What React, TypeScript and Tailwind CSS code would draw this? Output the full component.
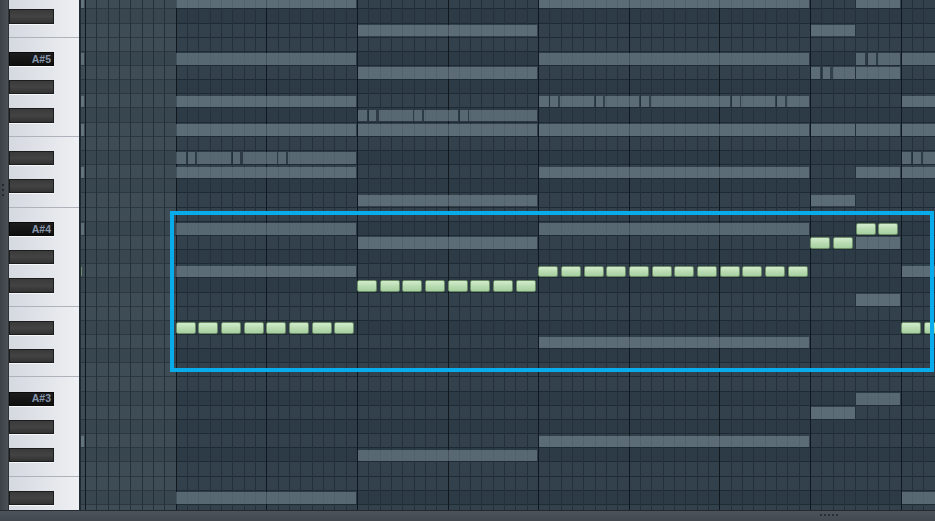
import React from "react";

const ROW_H = 14.1667;
const ROW0 = -4.78;
const COL_W = 11.3333;
const COL0 = 4;

const NAMES = [
  "D6", "C#6", "C6", "B5", "A#5", "A5", "G#5", "G5", "F#5", "F5", "E5", "D#5", "D5", "C#5", "C5", "B4",
  "A#4", "A4", "G#4", "G4", "F#4", "F4", "E4", "D#4", "D4", "C#4", "C4", "B3", "A#3", "A3", "G#3", "G3",
  "F#3", "F3", "E3", "D#3", "D3",
];

const isBlack = (n: string) => n.includes("#");
const isBoundary = (n: string) => n.startsWith("C") && !n.includes("#") || (n.startsWith("F") && !n.includes("#"));

type Note = { c: number; len: number; r: number };

const ghost: Note[] = [];
const full = (c: number, len: number, rows: number[]) => rows.forEach((r) => ghost.push({ c, len, r }));
const sub = (c: number, r: number, parts: [number, number][]) =>
  parts.forEach(([s, l]) => ghost.push({ c: c + s, len: l, r }));

// stubs from previous bar
full(-1, 1, [0, 4, 7, 9, 12, 16, 31]);
// segment 1
full(8, 16, [0, 4, 7, 9, 12, 16, 19, 35]);
sub(8, 11, [[0, 1], [1, 0.8], [1.85, 3.15], [5, 0.8], [5.85, 3.15], [9, 0.85], [9.85, 6.15]]);
// segment 2
full(24, 16, [2, 5, 9, 14, 17, 32]);
sub(24, 8, [[0, 1], [1, 0.8], [1.85, 3.15], [5, 0.8], [5.85, 3.15], [9, 0.85], [9.85, 6.15]]);
// segment 3
full(40, 24, [0, 4, 9, 12, 16, 24, 31]);
sub(40, 7, [
  [0, 1], [1, 0.8], [1.85, 3.15], [5, 0.8], [5.85, 3.15], [9, 0.85], [9.85, 7.15],
  [17, 0.85], [17.85, 3.15], [21, 0.85], [21.85, 2.15],
]);
// segment 4
full(64, 4, [2, 9, 14, 29]);
sub(64, 5, [[0, 0.95], [1.05, 0.8], [1.9, 2.1]]);
// segment 5
full(68, 4, [0, 5, 9, 12, 17, 21, 28]);
sub(68, 4, [[0, 0.95], [1.05, 0.8], [1.9, 2.1]]);
// segment 6
full(72, 8, [4, 7, 9, 12, 19, 35]);
sub(72, 11, [[0, 0.95], [1.02, 0.8], [1.9, 6.1]]);

const green: Note[] = [];
for (let i = 0; i < 8; i++) green.push({ c: 8 + i * 2, len: 2, r: 23 });
for (let i = 0; i < 8; i++) green.push({ c: 24 + i * 2, len: 2, r: 20 });
for (let i = 0; i < 12; i++) green.push({ c: 40 + i * 2, len: 2, r: 19 });
green.push({ c: 64, len: 2, r: 17 }, { c: 66, len: 2, r: 17 });
green.push({ c: 68, len: 2, r: 16 }, { c: 70, len: 2, r: 16 });
green.push({ c: 72, len: 2, r: 23 }, { c: 74, len: 2, r: 23 });
green.push({ c: -2, len: 2, r: 19 });

const cols = Array.from({ length: 78 }, (_, i) => i - 1);

function Keyboard() {
  return (
    <div className="flex h-[510px] w-[81px] shrink-0">
      <div className="flex w-[9px] flex-col bg-gradient-to-r from-[#3c4146] to-[#4b5157] pl-[2px] pt-[184px] gap-[3px] border-r border-[#2f3439]">
        <div className="h-[2px] w-[2px] bg-[#25292d]" />
        <div className="h-[2px] w-[2px] bg-[#25292d]" />
        <div className="h-[2px] w-[2px] bg-[#25292d]" />
      </div>
      <div className="h-full w-[70px] overflow-hidden bg-gradient-to-r from-[#d5d9e0] via-[#e1e4e9] to-[#eef0f3]">
        <div className="mt-[-4.78px] flex flex-col">
          {NAMES.map((n) =>
            isBlack(n) ? (
              <div key={n} className="flex h-[14.1667px]">
                {n.startsWith("A#") ? (
                  <div className="flex h-full w-[45px] items-center justify-end border border-[#0a0a0a] bg-gradient-to-b from-[#1d1d1d] to-[#0e0e0e] pr-[2px] shadow-[0_1px_0_#f6f8fa] text-[10.5px] font-bold leading-none text-[#8797ad] [font-family:'Liberation_Sans',Arial,sans-serif]">
                    {n}
                  </div>
                ) : (
                  <div className="h-full w-[45px] border border-[#1c1c1c] bg-gradient-to-b from-[#3a3a3a] via-[#434343] to-[#323232] shadow-[0_1px_0_#f6f8fa]" />
                )}
              </div>
            ) : (
              <div key={n} className={isBoundary(n) ? "h-[14.1667px] border-b border-[#aeb3bb]" : "h-[14.1667px]"} />
            )
          )}
        </div>
      </div>
      <div className="h-full w-[2px] bg-[#1f2a31]" />
    </div>
  );
}

function Grid() {
  return (
    <div className="relative h-[510px] w-[854px] shrink-0 overflow-hidden bg-[#2f3e48]">
      <div className="mt-[-4.78px] flex flex-col">
        {NAMES.map((n) => (
          <div
            key={n}
            className={
              isBlack(n)
                ? "h-[14.1667px] border-b border-[#1f2b33] bg-[#2c3b45]"
                : "h-[14.1667px] border-b border-[#1f2b33] bg-[#32414b]"
            }
          />
        ))}
      </div>
      <div className="absolute bottom-0 left-[-7.3333px] top-0 flex">
        {cols.map((c) => (
          <div
            key={c}
            className={
              (c % 8 === 0 ? "border-l border-[#0f181e] " : "border-l border-[#24313a] ") +
              (c < 8 ? "bg-white/[0.06] " : "") +
              "h-full w-[11.3333px] shrink-0"
            }
          />
        ))}
      </div>
      {ghost.map((g, i) => (
        <div
          key={"g" + i}
          className="absolute bg-[#a0b2c0]/[0.38]"
          style={{
            left: COL0 + g.c * COL_W + 0.8,
            width: g.len * COL_W - 1.8,
            top: ROW0 + g.r * ROW_H + 1.3,
            height: ROW_H - 2.6,
          }}
        />
      ))}
      {green.map((g, i) => (
        <div
          key={"n" + i}
          className="absolute rounded-[2px] border border-[#6c8c68] bg-gradient-to-b from-[#d2eccc] via-[#b9dcb3] to-[#a6cfa0]"
          style={{
            left: COL0 + g.c * COL_W,
            width: g.len * COL_W - 2.6,
            top: ROW0 + g.r * ROW_H + 1.3,
            height: ROW_H - 2.5,
          }}
        />
      ))}
      <div className="absolute left-[89px] top-[211px] h-[161px] w-[764px] border-4 border-[#08acea]" />
    </div>
  );
}

export default function App() {
  return (
    <div className="h-[521px] w-[935px] overflow-hidden bg-[#2f3e48]">
      <div className="flex">
        <Keyboard />
        <Grid />
      </div>
      <div className="relative h-[11px] w-full border-t border-[#23292e] bg-gradient-to-b from-[#4d535a] to-[#43494f]">
        <div className="absolute left-[820px] top-[3px] flex gap-[2px]">
          <div className="h-[2px] w-[2px] bg-[#2a2f34]" />
          <div className="h-[2px] w-[2px] bg-[#2a2f34]" />
          <div className="h-[2px] w-[2px] bg-[#2a2f34]" />
          <div className="h-[2px] w-[2px] bg-[#2a2f34]" />
          <div className="h-[2px] w-[2px] bg-[#2a2f34]" />
        </div>
      </div>
    </div>
  );
}
